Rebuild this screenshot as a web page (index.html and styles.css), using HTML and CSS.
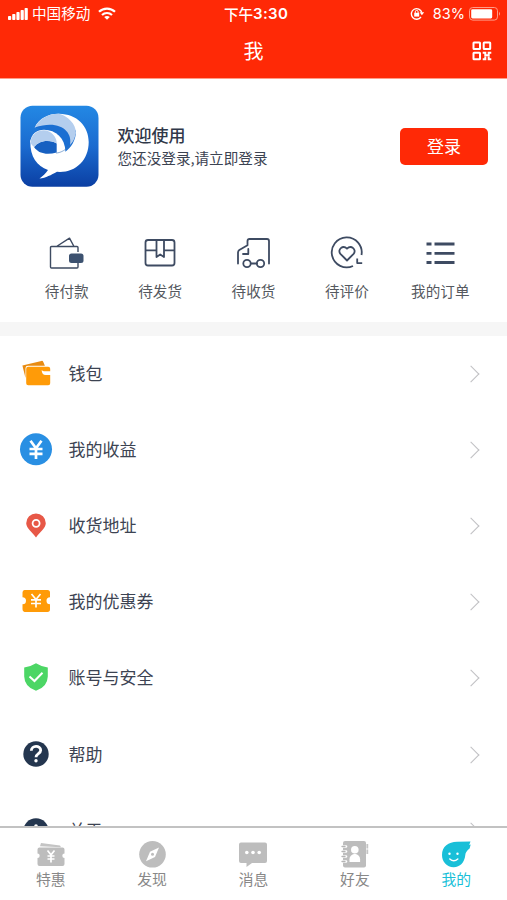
FILE: index.html
```html
<!DOCTYPE html>
<html lang="zh-CN">
<head>
<meta charset="utf-8">
<title>我</title>
<link rel="stylesheet" href="styles.css">
</head>
<body>
<div class="app">
  <header class="header">
    <div class="status">
      <div class="status-left">
        <svg width="20" height="12" viewBox="0 0 20 12" fill="#fff"><rect x="0" y="8" width="3.2" height="4" rx=".8"/><rect x="4.2" y="6" width="3.2" height="6" rx=".8"/><rect x="8.4" y="4" width="3.2" height="8" rx=".8"/><rect x="12.6" y="2" width="3.2" height="10" rx=".8"/><rect x="16.6" y="0" width="3.2" height="12" rx=".8"/></svg>
        <span class="carrier">中国移动</span>
        <svg class="wifi" width="18" height="13" viewBox="0 0 18 13" fill="none" stroke="#fff" stroke-width="2.2"><path d="M1 4.8C5.4.5 12.6.5 17 4.8M4 8c2.8-2.7 7.2-2.7 10 0"/><path d="M9 12.8 6.2 10c1.6-1.4 4-1.4 5.6 0z" fill="#fff" stroke="none"/></svg>
      </div>
      <div class="time">下午<b>3:30</b></div>
      <div class="status-right">
        <svg width="15" height="13" viewBox="0 0 15 13" fill="none" stroke="#fff" stroke-width="1.4"><path d="M11 10A5.3 5.3 0 1 1 11.8 5.5"/><path d="m9.6 5.3 4.6 0-2.3 3z" fill="#fff" stroke="none"/><path d="M4.2 5.8h5v3.8h-5z" fill="#fff" stroke="none"/><path d="M5.3 6V4.8a1.4 1.4 0 0 1 2.8 0V6" stroke-width="1"/></svg>
        <span class="percent">83%</span>
        <svg width="32" height="14" viewBox="0 0 32 14"><rect x=".5" y=".5" width="28" height="12.6" rx="3.2" fill="none" stroke="#ff9c88"/><rect x="2.2" y="2.2" width="21" height="9.2" rx="1.3" fill="#fff"/><path d="M30 4.8q2 2 0 4z" fill="#ff9c88"/></svg>
      </div>
    </div>
    <div class="nav">
      <h1>我</h1>
      <svg class="qr" width="20" height="20" viewBox="0 0 20 20" fill="none" stroke="#fff" stroke-width="2"><rect x="1.5" y="1.5" width="6.5" height="6.5" rx=".5"/><rect x="11.7" y="1.5" width="6.5" height="6.5" rx=".5"/><rect x="1.5" y="11.7" width="6.5" height="6.5" rx=".5"/><path d="M10.7 11.7h2.6v2.6h3.4v-2.6h2.6M10.7 18.2h2.6v-2.6M16.7 15.600v2.600h2.600"/></svg>
    </div>
  </header>

  <section class="profile">
    <svg class="logo" width="79" height="82" viewBox="0 0 79 82">
      <defs><linearGradient id="bg" x2="0" y2="1"><stop stop-color="#2388e4"/><stop offset=".5" stop-color="#1b6bd0"/><stop offset="1" stop-color="#0b3fa3"/></linearGradient></defs>
      <rect x=".5" y=".7" width="78" height="81" rx="12" fill="url(#bg)"/>
      <path d="M14.700 22.500C19 13 29 8.500 39 8.700C57 9 68.700 21 68.700 37C68.700 55 56 67 40 67L37 66.800C31 70 26 73 19.500 73.500C23 71 26 68 28 65C17 61 10 52 10.300 36C12 30 18 25 25 25L40 20Z" fill="#fff"/>
      <path d="M14.700 22.500C24 14.500 44 12 56 26C56 35 51 43 45 47L24 47L12 40L11 33C13 27 18 25 20 24Z" fill="#1b6fd2"/>
      <path d="M14.700 22.500C20 13 29 8.500 39 8.700C48 11 56 19 56 28C54.500 34 53 37 50 40C53 26 39 14 14.700 22.500Z" fill="#b4ceee"/>
      <path d="M10.300 37C11 29 17 24.800 24 24.800C36 25 45 33 45.500 47C42 49 36 48.500 30 47.500L14 43Z" fill="#fff"/>
      <path d="M14 42C20 35 29 34 36.700 38.500V47.500C27 50 19 49 14 42Z" fill="#1760c1"/>
      <path d="M10.500 38C11 27 22 23 29 26.500C34 29 37 34 36.700 38.500C28 34 19 36 14 42Z" fill="#b4ceee"/>
      <path d="M50 40C47 44 41 48 36 48" fill="none" stroke="#3973b9" stroke-width=".6"/>
    </svg>
    <div class="welcome"><strong>欢迎使用</strong><span>您还没登录,请立即登录</span></div>
    <button class="login">登录</button>
  </section>

  <section class="orders">
    <div class="order"><svg width="36" height="36" viewBox="0 0 36 36" fill="none" stroke="#3e4b62" stroke-width="1.4" stroke-linejoin="round"><path d="M29 17V12.5Q29 11.5 28 11.5H2.5Q1.5 11.5 1.5 12.5V32Q1.5 33 2.5 33H28Q29 33 29 32V27M7.5 11.5 20.5 3.2 25 11.5"/><rect x="20" y="18.500" width="14.5" height="9.500" rx="2.5" fill="#3d5270" stroke="none"/></svg><span>待付款</span></div>
    <div class="order"><svg width="36" height="36" viewBox="0 0 36 36" fill="none" stroke="#3e4b62" stroke-width="1.8" stroke-linejoin="round"><rect x="3.5" y="5" width="29" height="25.5" rx="2.5"/><path d="M3.5 15.3h11M22 15.3h10.5M14.5 5v17l3.7-2.5L22 22V5"/></svg><span>待发货</span></div>
    <div class="order"><svg width="36" height="36" viewBox="0 0 36 36" fill="none" stroke="#3e4b62" stroke-width="1.8" stroke-linejoin="round" stroke-linecap="round"><path d="M3 28.5V17.5Q3 16 4.300 15L12.500 10.3V6Q12.500 4 14.500 4H32Q34 4 34 6V28.5M8 19h5.3v-5M16 28.5h6"/><circle cx="12" cy="28.5" r="3.7"/><circle cx="25.500" cy="28.5" r="3.7"/></svg><span>待收货</span></div>
    <div class="order"><svg width="36" height="36" viewBox="0 0 36 36" fill="none" stroke="#3e4b62" stroke-width="1.8" stroke-linejoin="round"><path d="M32.5 20A15 15 0 1 0 24 31M28.2 23.5v4.6h5"/><path d="M18 25.5 11.4 18.8C8 14.8 13.8 9.5 18 13.7C22.2 9.5 28 14.8 24.6 18.8Z"/></svg><span>待评价</span></div>
    <div class="order"><svg width="36" height="36" viewBox="0 0 36 36" fill="none" stroke="#3e4b62" stroke-width="2.8"><path d="M4.500 9h5M12.500 9h20M4.500 18.300h5M12.500 18.300h20M4.500 27.500h5M12.500 27.500h20"/></svg><span>我的订单</span></div>
  </section>

  <main class="menu">
    <div class="row"><svg width="34" height="34" viewBox="0 0 34 34"><path d="m3.4 8.5 19-4.6q1.4-.3 1.9 1l1.6 3.8H9Q6.5 8.8 6.5 11v10z" fill="#e88b12"/><path d="M9.2 9.8h20q2 0 2 2v2.5h-6q-1.3 0-2.500-1.300 0 5 4 5h4.5v8.2q0 2-2 2h-20q-2 0-2-2V11.8q0-2 2-2z" fill="#ff9b08"/></svg><span>钱包</span><i></i></div>
    <div class="row"><svg width="34" height="34" viewBox="0 0 34 34"><circle cx="17" cy="16.3" r="16" fill="#298fe3"/><path d="m11.5 7.8 5.5 7.5 5.5-7.5M17 14.5V26M10.5 16h13M10.5 20.8h13" fill="none" stroke="#fff" stroke-width="2.7"/></svg><span>我的收益</span><i></i></div>
    <div class="row"><svg width="34" height="34" viewBox="0 0 34 34"><path d="M17 28.4C14 24 7.2 19.2 7.2 14.2a9.8 9.8 0 0 1 19.6 0C26.8 19.2 20 24 17 28.4Z" fill="#e75847"/><circle cx="17.1" cy="14.3" r="3.5" fill="none" stroke="#fff" stroke-width="1.8"/></svg><span>收货地址</span><i></i></div>
    <div class="row"><svg width="34" height="34" viewBox="0 0 34 34"><path d="M5.5 5h23Q31 5 31 7.500v4.800a3.500 3.500 0 0 0 0 7v5Q31 27 28.500 27h-23Q3.500 27 3.500 24.300v-5a3.500 3.500 0 0 0 0-7V7.500Q3.500 5 5.500 5z" fill="#ff9b08"/><path d="m12.500 9 4.500 5.500L21.500 9M17 14v8.500M12 14.800h10M12 18.500h10" fill="none" stroke="#fff" stroke-width="1.700"/></svg><span>我的优惠券</span><i></i></div>
    <div class="row"><svg width="34" height="34" viewBox="0 0 34 34"><path d="M17 2.300Q22.500 5.800 28.800 6.500V15.500Q28.500 26 17 29.800Q5.500 26 5.200 15.500V6.500Q11.500 5.800 17 2.300Z" fill="#4cd665"/><path d="m10.500 15.500 5 4.500 8-8.200" fill="none" stroke="#fff" stroke-width="2"/></svg><span>账号与安全</span><i></i></div>
    <div class="row"><svg width="34" height="34" viewBox="0 0 34 34"><circle cx="17" cy="16" r="12.700" fill="#24364f"/><path d="M12.300 12.800C12.300 7 21.700 7 21.700 12.200C21.700 15.700 17 15.500 17 19.300" fill="none" stroke="#fff" stroke-width="2.800"/><circle cx="17" cy="22.800" r="1.700" fill="#fff"/></svg><span>帮助</span><i></i></div>
    <div class="row"><svg width="34" height="34" viewBox="0 0 34 34"><circle cx="17" cy="17" r="12.700" fill="#24364f"/><circle cx="17" cy="12" r="1.800" fill="#fff"/><path d="M17 16v9" stroke="#fff" stroke-width="3"/></svg><span>关于</span><i></i></div>
  </main>

  <footer class="tabs">
    <div class="tab"><svg width="30" height="30" viewBox="0 0 30 30"><path d="m4 6.300 1-3.200 19 2.300 1 1.900z" fill="#c4c4c4"/><path d="M3.500 7.500h23Q28.500 7.500 28.500 9.500v4a2.200 2.200 0 0 0 0 4.400v6q0 2-2 2h-23q-2 0-2-2v-6a2.200 2.200 0 0 0 0-4.400v-4q0-2 2-2z" fill="#bdbdbd"/><path d="m11.500 10.500 3.500 4.300 3.500-4.300M15 14.500v8M11.500 16h7M11.500 19h7" fill="none" stroke="#fff" stroke-width="1.700"/></svg><span>特惠</span></div>
    <div class="tab"><svg width="30" height="30" viewBox="0 0 30 30"><circle cx="15.500" cy="14.300" r="13.300" fill="#bdbdbd"/><path d="m22 7.500-4 9.500-9 4.200 4-9.500z" fill="#fff"/><circle cx="15.500" cy="14.300" r="1.500" fill="#bdbdbd"/></svg><span>发现</span></div>
    <div class="tab"><svg width="30" height="30" viewBox="0 0 30 30"><path d="M3 2.500h24q2 0 2 2v16.500q0 2-2 2H14L8.500 27v-4H3q-2 0-2-2V4.500q0-2 2-2z" fill="#bdbdbd"/><g fill="#fff"><circle cx="8.800" cy="12.500" r="1.800"/><circle cx="15" cy="12.500" r="1.800"/><circle cx="21.200" cy="12.500" r="1.800"/></g></svg><span>消息</span></div>
    <div class="tab"><svg width="30" height="30" viewBox="0 0 30 30"><path d="M5 1h19q2 0 2 2v22.500q0 2-2 2H5q-2 0-2-2V3q0-2 2-2z" fill="#bdbdbd"/><path d="M2 6.500h4M2 11.500h4M2 16.500h4M2 21.500h4" stroke="#fff" stroke-width="2.700" stroke-linecap="round"/><path d="M2 6.500h3M2 11.500h3M2 16.500h3M2 21.500h3" stroke="#b5b5b5" stroke-width="1.300" stroke-linecap="round"/><path d="M27.300 4v11" stroke="#c4c4c4" stroke-width="1.800" stroke-dasharray="4.500 1"/><circle cx="14.800" cy="9.800" r="3.800" fill="#fff"/><path d="M9.500 22v-2.700q0-4.300 5.300-5.500 5.300 1.200 5.300 5.500V22z" fill="#fff"/></svg><span>好友</span></div>
    <div class="tab active"><svg width="30" height="30" viewBox="0 0 30 30"><path d="M29.500 1.600 28.200 5 29.700 4.500 28.600 8.500Q24.500 11.500 24.300 15C23.500 22.500 19 27.200 12.700 27.200 5.700 27.200 1 21.700 1 15 1 6.500 7.500 2 16 1.800z" fill="#19bfd8"/><circle cx="8.500" cy="13.800" r="1.200" fill="#fff"/><circle cx="16.500" cy="13.800" r="1.200" fill="#fff"/><path d="M8.800 19q4 3.500 8 0" fill="none" stroke="#fff" stroke-width="1.500" stroke-linecap="round"/></svg><span>我的</span></div>
  </footer>
</div>
</body>
</html>
```

FILE: styles.css
```css
* { box-sizing: border-box; }
body {
  margin: 0;
  background: #fff;
  color: #3c4352;
  font-family: "Noto Sans CJK SC", sans-serif;
}
svg { display: block; flex: none; }
.app {
  display: flex;
  flex-direction: column;
  height: 900px;
  overflow: hidden;
}
.header {
  flex: none;
  height: 79px;
  background: #ff2906;
  color: #fff;
  border-bottom: 1px solid #ff9d88;
}
.status {
  display: grid;
  grid-template-columns: 1fr auto 1fr;
  align-items: center;
  height: 27px;
  padding: 0 6px 0 8px;
  font-size: 14.6px;
  line-height: 20px;
}
.status-left, .status-right { display: flex; align-items: center; }
.status-right { justify-content: flex-end; }
.carrier { margin: -1px 8px 0 4px; }
.time { display: flex; align-items: center; font-weight: 500; padding-left: 3px; }
.time b { font: 600 15px/20px Inter, sans-serif; letter-spacing: .3px; }
.percent { margin: 0 4px 0 8px; font: 400 14.5px/20px Inter, sans-serif; }
.nav {
  display: grid;
  grid-template-columns: 1fr auto 1fr;
  align-items: center;
  height: 48px;
  padding-right: 15px;
}
.nav h1 {
  grid-column: 2;
  margin: 0 0 0 15px;
  font-size: 20px;
  font-weight: 400;
  line-height: 28px;
}
.qr { justify-self: end; }
.profile {
  flex: none;
  display: flex;
  align-items: center;
  height: 134px;
  padding: 0 19px 0 20px;
}
.welcome {
  display: flex;
  flex-direction: column;
  margin: 0 auto 0 18.5px;
}
.welcome strong {
  color: #303849;
  font-size: 17px;
  font-weight: 500;
  line-height: 24px;
}
.welcome span { font-size: 14.6px; line-height: 22px; }
.login {
  width: 88px;
  height: 37px;
  padding: 0 0 1px;
  border: 0;
  border-radius: 5px;
  background: #ff2906;
  color: #fff;
  font: 400 17px/24px "Noto Sans CJK SC", sans-serif;
}
.orders {
  flex: none;
  display: grid;
  grid-template-columns: repeat(5, 1fr);
  height: 123px;
  padding: 22px 20px 0;
  border-bottom: 14px solid #f6f6f6;
}
.order {
  display: flex;
  flex-direction: column;
  align-items: center;
  gap: 10px;
  color: #555960;
  font-size: 14.6px;
  line-height: 20px;
}
.menu { flex: 1; min-height: 0; overflow: hidden; }
.row {
  display: flex;
  align-items: center;
  height: 76.1px;
  padding: 0 30px 0 19px;
  font-size: 17px;
  line-height: 24px;
}
.row span { flex: 1; margin: -2px 0 0 15.5px; }
.row i {
  width: 12px;
  height: 12px;
  border: solid #c0c0c3;
  border-width: 1.5px 1.5px 0 0;
  transform: rotate(45deg);
}
.tabs {
  flex: none;
  display: grid;
  grid-template-columns: repeat(5, 1fr);
  height: 74px;
  padding-top: 12px;
  border-top: 2px solid #c2c2c2;
  background: #fff;
}
.tab {
  display: flex;
  flex-direction: column;
  align-items: center;
  color: #888;
  font-size: 14.8px;
  line-height: 20px;
}
.tab span { margin-top: -1px; }
.active { color: #19bfd8; }
```
